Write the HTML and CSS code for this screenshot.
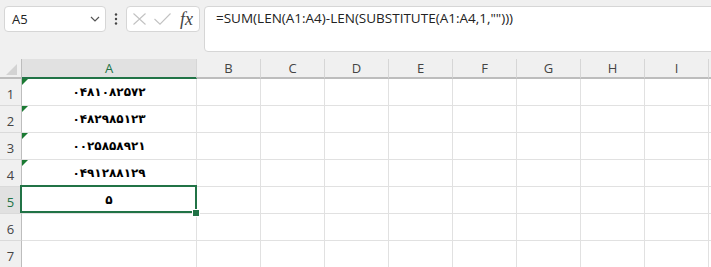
FILE: index.html
```html
<!DOCTYPE html>
<html lang="en">

<head>
    <meta charset="UTF-8">
    <title>Sheet</title>
    <link rel="stylesheet" href="styles.css">
</head>

<body>
    <div class="toolbar">
        <div class="name-box">
            <span>A5</span>
            <svg width="10" height="6" viewBox="0 0 10 6"><path d="M1 1 L5 5 L9 1" fill="none" stroke="#555" stroke-width="1.2"/></svg>
        </div>
        <svg class="dots" width="4" height="12" viewBox="0 0 4 12">
            <circle cx="2" cy="1.5" r="1.2" fill="#444"/>
            <circle cx="2" cy="6" r="1.2" fill="#444"/>
            <circle cx="2" cy="10.5" r="1.2" fill="#444"/>
        </svg>
        <div class="fx-box">
            <svg width="13" height="12" viewBox="0 0 13 12"><path d="M0.5 0.5 L12.5 11.5 M12.5 0.5 L0.5 11.5" stroke="#c2c2c2" stroke-width="1.1"/></svg>
            <svg class="check" width="17" height="12" viewBox="0 0 17 12"><path d="M0.5 6 L6 11.2 L16.5 0.5" fill="none" stroke="#c2c2c2" stroke-width="1.1"/></svg>
            <span class="fx">fx</span>
        </div>
        <div class="formula">=SUM(LEN(A1:A4)-LEN(SUBSTITUTE(A1:A4,1,"")))</div>
    </div>

    <div class="sheet">
        <div class="row head">
            <div class="rh corner"><span class="corner-mark"></span></div>
            <div class="cell col-a active">A</div>
            <div class="cell">B</div>
            <div class="cell">C</div>
            <div class="cell">D</div>
            <div class="cell">E</div>
            <div class="cell">F</div>
            <div class="cell">G</div>
            <div class="cell">H</div>
            <div class="cell">I</div>
            <div class="cell"></div>
        </div>
        <div class="row">
            <div class="rh">1</div>
            <div class="cell col-a flag"><span class="val">۰۴۸۱۰۸۲۵۷۲</span></div>
            <div class="cell"></div><div class="cell"></div><div class="cell"></div><div class="cell"></div><div class="cell"></div><div class="cell"></div><div class="cell"></div><div class="cell"></div><div class="cell"></div>
        </div>
        <div class="row">
            <div class="rh">2</div>
            <div class="cell col-a flag"><span class="val">۰۴۸۲۹۸۵۱۲۳</span></div>
            <div class="cell"></div><div class="cell"></div><div class="cell"></div><div class="cell"></div><div class="cell"></div><div class="cell"></div><div class="cell"></div><div class="cell"></div><div class="cell"></div>
        </div>
        <div class="row">
            <div class="rh">3</div>
            <div class="cell col-a flag"><span class="val">۰۰۲۵۸۵۸۹۲۱</span></div>
            <div class="cell"></div><div class="cell"></div><div class="cell"></div><div class="cell"></div><div class="cell"></div><div class="cell"></div><div class="cell"></div><div class="cell"></div><div class="cell"></div>
        </div>
        <div class="row">
            <div class="rh">4</div>
            <div class="cell col-a flag"><span class="val">۰۴۹۱۲۸۸۱۲۹</span></div>
            <div class="cell"></div><div class="cell"></div><div class="cell"></div><div class="cell"></div><div class="cell"></div><div class="cell"></div><div class="cell"></div><div class="cell"></div><div class="cell"></div>
        </div>
        <div class="row">
            <div class="rh active">5</div>
            <div class="cell col-a selected">
                <span class="val">۵</span>
                <div class="sel-box"><span class="handle"></span></div>
            </div>
            <div class="cell"></div><div class="cell"></div><div class="cell"></div><div class="cell"></div><div class="cell"></div><div class="cell"></div><div class="cell"></div><div class="cell"></div><div class="cell"></div>
        </div>
        <div class="row">
            <div class="rh">6</div>
            <div class="cell col-a"></div>
            <div class="cell"></div><div class="cell"></div><div class="cell"></div><div class="cell"></div><div class="cell"></div><div class="cell"></div><div class="cell"></div><div class="cell"></div><div class="cell"></div>
        </div>
        <div class="row">
            <div class="rh">7</div>
            <div class="cell col-a"></div>
            <div class="cell"></div><div class="cell"></div><div class="cell"></div><div class="cell"></div><div class="cell"></div><div class="cell"></div><div class="cell"></div><div class="cell"></div><div class="cell"></div>
        </div>
    </div>
</body>

</html>
```

FILE: styles.css
```css
body {
    margin: 0;
    background: #f0f0f0;
    font-family: "Open Sans", sans-serif;
    overflow: hidden;
}

.toolbar {
    display: flex;
    align-items: flex-start;
    height: 59px;
    padding: 6px 0 0 4px;
    box-sizing: border-box;
}

.name-box {
    width: 102px;
    height: 26px;
    box-sizing: border-box;
    background: #fff;
    border: 1px solid #d6d6d6;
    border-radius: 4px;
    display: flex;
    align-items: center;
    justify-content: space-between;
    padding: 0 5px 0 7px;
    font-size: 13px;
    color: #222;
}

.dots {
    margin: 7px 8px 0 8px;
}

.fx-box {
    width: 74px;
    height: 26px;
    box-sizing: border-box;
    background: #fff;
    border: 1px solid #d6d6d6;
    border-radius: 4px;
    display: flex;
    align-items: center;
    padding-left: 6px;
}

.check {
    margin-left: 8px;
}

.fx {
    margin-left: 9px;
    font-family: "Liberation Serif", serif;
    font-style: italic;
    font-size: 18px;
    color: #444;
    line-height: 1;
}

.formula {
    flex: 1;
    height: 46px;
    box-sizing: border-box;
    margin-left: 4px;
    margin-right: -8px;
    background: #fff;
    border: 1px solid #d6d6d6;
    border-radius: 4px;
    padding: 2px 11px;
    font-size: 13.5px;
    color: #222;
    white-space: nowrap;
}

.sheet {
    background: #fff;
    height: 208px;
    overflow: hidden;
}

.row {
    display: flex;
    height: 27px;
}

.row.head {
    height: 20px;
    background: #f0f0f0;
}

.cell {
    flex: none;
    width: 64px;
    box-sizing: border-box;
    border-right: 1px solid #e1e1e1;
    border-bottom: 1px solid #e1e1e1;
    display: flex;
    align-items: center;
    justify-content: center;
}

.col-a {
    width: 175px;
}

.head .cell {
    border-bottom: 2px solid #bdbdbd;
    border-right-color: #d6d6d6;
    font-size: 13px;
    color: #444;
}

.head .cell.active {
    background: #e1e1e1;
    color: #217346;
    border-bottom-color: #217346;
}

.rh {
    flex: none;
    width: 22px;
    box-sizing: border-box;
    background: #f0f0f0;
    border-right: 1px solid #bdbdbd;
    border-bottom: 1px solid #dadada;
    display: flex;
    align-items: center;
    justify-content: center;
    padding-top: 3px;
    font-size: 13px;
    color: #444;
}

.rh.active {
    background: #e1e1e1;
    color: #217346;
}

.rh.corner {
    position: relative;
    border-bottom: 2px solid #bdbdbd;
    padding: 0;
}

.corner-mark {
    position: absolute;
    right: 4px;
    bottom: 2px;
    width: 0;
    height: 0;
    border-left: 11px solid transparent;
    border-bottom: 11px solid #d3d3d3;
}

.val {
    font-family: "DejaVu Sans", sans-serif;
    font-weight: bold;
    font-size: 12px;
    color: #000;
}

.flag,
.selected {
    position: relative;
}

.flag::before {
    content: "";
    position: absolute;
    left: 0;
    top: 0;
    width: 0;
    height: 0;
    border-top: 6px solid #1b7a33;
    border-right: 6px solid transparent;
}

.sel-box {
    position: absolute;
    left: -2px;
    top: -2px;
    right: -1px;
    bottom: 0;
    border: 2px solid #217346;
    z-index: 2;
}

.handle {
    position: absolute;
    right: -5px;
    bottom: -6px;
    width: 8px;
    height: 8px;
    box-sizing: border-box;
    background: #217346;
    border: 1px solid #fff;
}
```
